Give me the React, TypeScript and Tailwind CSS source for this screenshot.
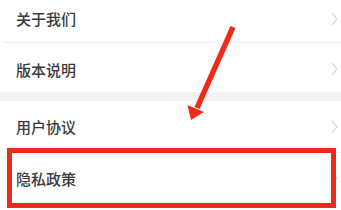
import React from 'react';

const Chevron = () => (
  <svg width="7" height="14" viewBox="0 0 7 14" className="shrink-0">
    <polyline points="1,1 6,7 1,13" fill="none" stroke="#cfcfcf" strokeWidth="1.1" />
  </svg>
);

const Row = ({ label, className, arrow = true }: { label: string; className: string; arrow?: boolean }) => (
  <div className={`flex items-center justify-between pl-4 pr-[3px] ${className}`}>
    <span className="text-[15px] font-medium text-[#3a3a3a] leading-none">{label}</span>
    {arrow && <Chevron />}
  </div>
);

export default function App() {
  return (
    <div
      className="relative w-[341px] h-[210px] overflow-hidden bg-white"
      style={{ fontFamily: '"Noto Sans CJK SC", "Noto Sans", sans-serif' }}
    >
      <Row label="关于我们" className="h-[42px] pb-[5px]" />
      <div className="ml-[3px] h-px bg-[#eeeeee]" />
      <Row label="版本说明" className="h-[49px] pt-[3px]" />
      <div className="h-[9px] bg-[#f3f3f3]" />
      <Row label="用户协议" className="h-[51px]" />
      <div className="ml-[3px] h-px bg-[#eeeeee]" />
      <Row label="隐私政策" className="h-[50px] pr-0" />

      {/* annotation overlay */}
      <div className="absolute left-[7px] top-[148px] w-[329px] h-[60px] border-[5px] border-[#ee2a1b]" />
      <svg className="absolute left-0 top-0" width="341" height="210" viewBox="0 0 341 210">
        <line x1="233" y1="27" x2="197" y2="108" stroke="#ee2a1b" strokeWidth="5.5" />
        <polygon points="191,120 187.5,105 204,112" fill="#ee2a1b" />
      </svg>
    </div>
  );
}
